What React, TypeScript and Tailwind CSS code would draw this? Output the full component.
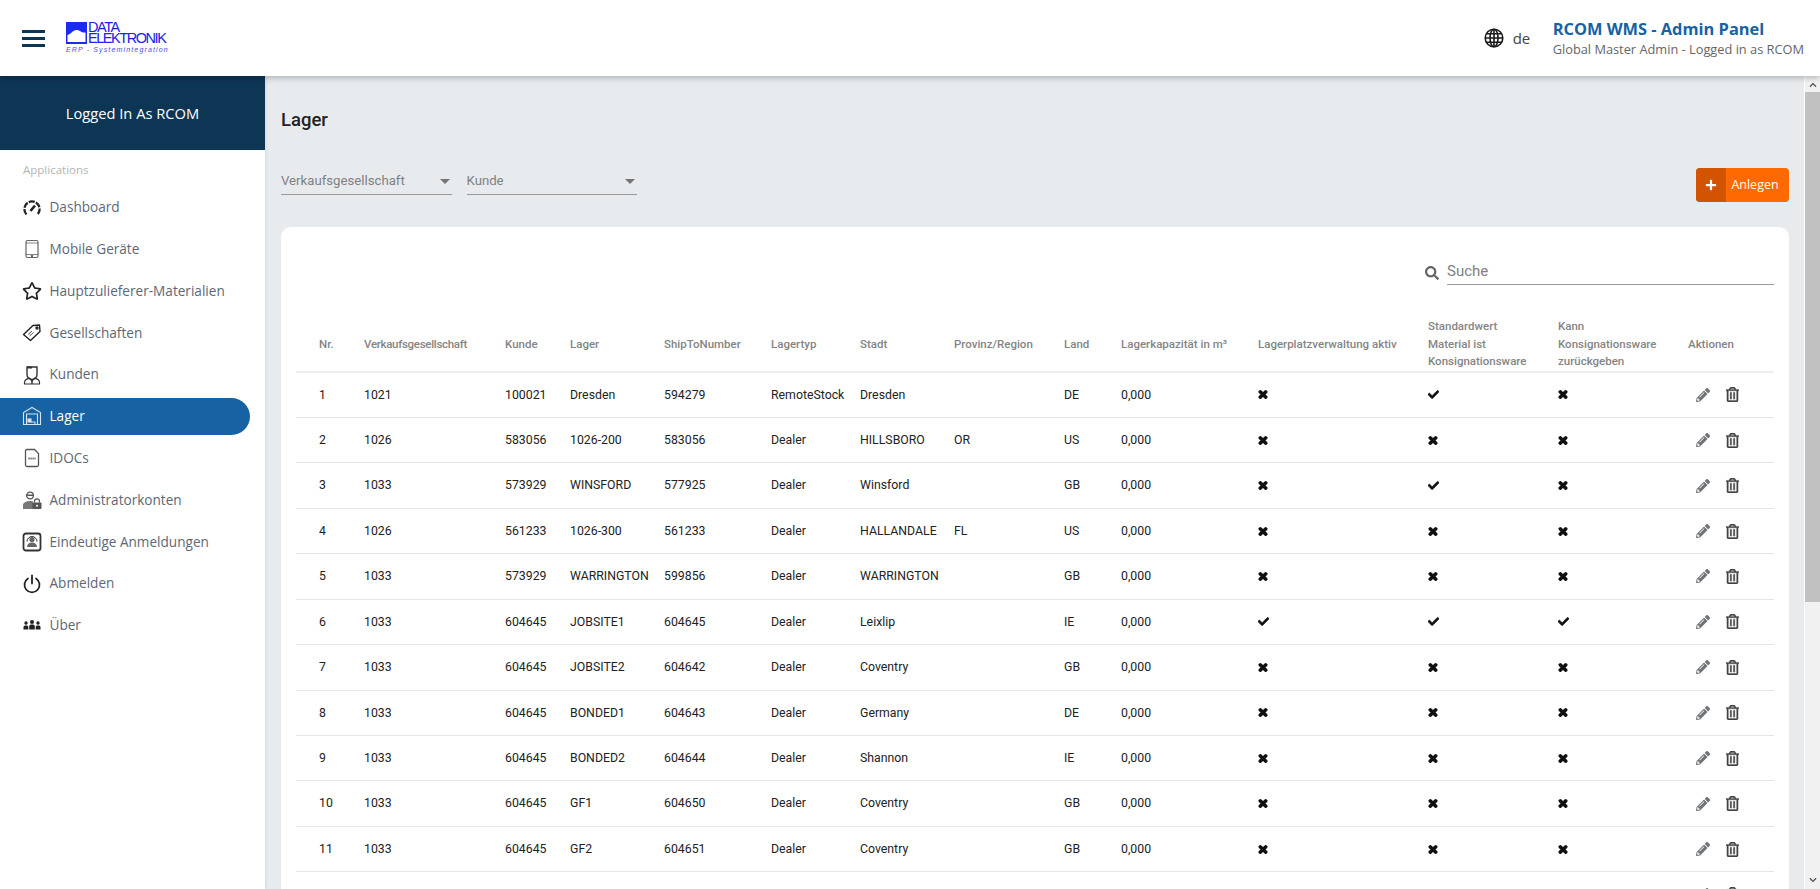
import React from "react";
import { FaCheck, FaTimes, FaPencilAlt, FaRegTrashAlt, FaSearch, FaPlus, FaRegStar, FaChevronUp, FaChevronDown } from "react-icons/fa";

const ic = "w-[20px] h-[20px] shrink-0";

function Gauge() {
  return (
    <svg viewBox="0 0 20 20" className={ic} fill="none" stroke="#222" strokeWidth="2.3">
      <path d="M4.500 16.500A7.500 7.500 0 0 1 2.400 11 7.600 7.600 0 0 1 17.600 11a7.500 7.500 0 0 1-2.100 5.500" strokeDasharray="6 1.300" />
      <path d="M8.500 13l4.500-5.500" strokeWidth="2.600" />
    </svg>
  );
}
function Tablet() {
  return (
    <svg viewBox="0 0 20 20" className={ic} fill="none" stroke="#666" strokeWidth="1.2">
      <rect x="4" y="1.500" width="12" height="17" rx="1.500" />
      <path d="M4 15.500h12M4 4h12" strokeWidth="0.8" />
      <circle cx="10" cy="17" r="0.6" fill="#666" />
    </svg>
  );
}
function Tag() {
  return (
    <svg viewBox="0 0 20 20" className={ic} fill="none" stroke="#222" strokeWidth="1.4">
      <path d="M1.500 11.500 11 2.500l6.500-.5.500 6.500-9.500 9z" strokeLinejoin="round" />
      <circle cx="15" cy="5" r="1" />
      <path d="M6 11.500l4-3.500M7.500 13l4-3.500" strokeWidth="1" stroke="#555" />
    </svg>
  );
}
function Client() {
  return (
    <svg viewBox="0 0 20 20" className={ic} fill="none" stroke="#333" strokeWidth="1.4">
      <path d="M5 2h10v7.500a5 5 0 0 1-10 0z" />
      <path d="M5 2.500l5 0" strokeWidth="2" />
      <path d="M2.500 19v-1.500c0-2.500 2-3.500 5-4.300l2.500 2.800 2.500-2.800c3 .8 5 1.800 5 4.300V19z" strokeWidth="1.2" />
      <path d="M10 16v3" />
    </svg>
  );
}
function Warehouse({ color = "#d5e3ef" }: { color?: string }) {
  return (
    <svg viewBox="0 0 20 20" className={ic} fill="none" stroke={color} strokeWidth="1.1">
      <path d="M1.500 18.500V6.500L10 1.500l8.500 5v12z" />
      <path d="M4.500 18.500V8h11v10.500" />
      <rect x="6" y="13" width="3" height="3" fill={color} />
      <path d="M9 16h4v2.500H6" />
    </svg>
  );
}
function FileXml() {
  return (
    <svg viewBox="0 0 20 20" className={ic} fill="none" stroke="#555" strokeWidth="1.3">
      <path d="M3.500 3a1.500 1.500 0 0 1 1.500-1.500h7.500l4 4V17a1.500 1.500 0 0 1-1.500 1.500H5A1.500 1.500 0 0 1 3.500 17z" />
      <path d="M6.500 10.500h7" strokeWidth="2" strokeDasharray="1.200 .8" />
    </svg>
  );
}
function AdminUser() {
  return (
    <svg viewBox="0 0 20 20" className={ic} fill="#555">
      <circle cx="8" cy="5.500" r="3.400" fill="none" stroke="#555" strokeWidth="1.200" />
      <path d="M4.500 4.500h7V6h-7z" />
      <path d="M1 19v-3.500c0-3 3-4.500 7-4.500 1 0 2 .1 3 .4V19z" fill="#777" />
      <rect x="10.500" y="12.500" width="9" height="6.500" rx="1" fill="#555" />
      <path d="M12.500 12.500v-1.200a2.500 2.500 0 0 1 5 0v1.200" fill="none" stroke="#555" strokeWidth="1.200" />
      <circle cx="15" cy="15.700" r="1" fill="#fff" />
    </svg>
  );
}
function Unique() {
  return (
    <svg viewBox="0 0 20 20" className={ic} fill="none" stroke="#333" strokeWidth="1.400">
      <rect x="1.500" y="1.500" width="17" height="17" rx="2.500" strokeWidth="1.800" />
      <circle cx="10" cy="7.500" r="2.600" fill="#666" stroke="none" />
      <path d="M5 15c0-3 2-4.500 5-4.500s5 1.500 5 4.500z" fill="#666" stroke="none" />
      <path d="M5 9.500a5 5 0 0 1 10 0" strokeWidth="1" />
    </svg>
  );
}
function Power() {
  return (
    <svg viewBox="0 0 20 20" className={ic} fill="none" stroke="#222" strokeWidth="1.800" strokeLinecap="round">
      <path d="M6 4.500a7.500 7.500 0 1 0 8 0" />
      <path d="M10 1.500v8" />
    </svg>
  );
}
function Team() {
  return (
    <svg viewBox="0 0 20 20" className={ic} fill="#222">
      <circle cx="4" cy="8" r="1.700" />
      <circle cx="10" cy="7" r="2" />
      <circle cx="16" cy="8" r="1.700" />
      <path d="M1.500 14.500V12a1.500 1.500 0 0 1 1.500-1.500h2A1.500 1.500 0 0 1 6.300 12v2.500z" />
      <path d="M7.200 14.500v-3.300A1.800 1.800 0 0 1 9 9.500h2a1.800 1.800 0 0 1 1.800 1.700v3.300z" />
      <path d="M13.700 14.500V12a1.500 1.500 0 0 1 1.300-1.500h2a1.500 1.500 0 0 1 1.500 1.500v2.500z" />
    </svg>
  );
}
function Globe() {
  return (
    <svg viewBox="0 0 20 20" className="w-[20px] h-[20px] shrink-0" fill="none" stroke="#1a1a1a" strokeWidth="1.600">
      <circle cx="10" cy="10" r="8.800" />
      <ellipse cx="10" cy="10" rx="4" ry="8.800" />
      <path d="M10 1.200v17.600M1.200 10h17.600M2.500 5.800h15M2.500 14.200h15" />
    </svg>
  );
}

const nav = [
  { label: "Dashboard", icon: <Gauge /> },
  { label: "Mobile Geräte", icon: <Tablet /> },
  { label: "Hauptzulieferer-Materialien", icon: <FaRegStar className="w-[20px] h-[20px] shrink-0 text-[#222]" /> },
  { label: "Gesellschaften", icon: <Tag /> },
  { label: "Kunden", icon: <Client /> },
  { label: "Lager", icon: <Warehouse />, active: true },
  { label: "IDOCs", icon: <FileXml /> },
  { label: "Administratorkonten", icon: <AdminUser /> },
  { label: "Eindeutige Anmeldungen", icon: <Unique /> },
  { label: "Abmelden", icon: <Power /> },
  { label: "Über", icon: <Team /> },
];

type Row = [string, string, string, string, string, string, string, string, string, boolean, boolean, boolean];
const rows: Row[] = [
  ["1021", "100021", "Dresden", "594279", "RemoteStock", "Dresden", "", "DE", "0,000", false, true, false],
  ["1026", "583056", "1026-200", "583056", "Dealer", "HILLSBORO", "OR", "US", "0,000", false, false, false],
  ["1033", "573929", "WINSFORD", "577925", "Dealer", "Winsford", "", "GB", "0,000", false, true, false],
  ["1026", "561233", "1026-300", "561233", "Dealer", "HALLANDALE", "FL", "US", "0,000", false, false, false],
  ["1033", "573929", "WARRINGTON", "599856", "Dealer", "WARRINGTON", "", "GB", "0,000", false, false, false],
  ["1033", "604645", "JOBSITE1", "604645", "Dealer", "Leixlip", "", "IE", "0,000", true, true, true],
  ["1033", "604645", "JOBSITE2", "604642", "Dealer", "Coventry", "", "GB", "0,000", false, false, false],
  ["1033", "604645", "BONDED1", "604643", "Dealer", "Germany", "", "DE", "0,000", false, false, false],
  ["1033", "604645", "BONDED2", "604644", "Dealer", "Shannon", "", "IE", "0,000", false, false, false],
  ["1033", "604645", "GF1", "604650", "Dealer", "Coventry", "", "GB", "0,000", false, false, false],
  ["1033", "604645", "GF2", "604651", "Dealer", "Coventry", "", "GB", "0,000", false, false, false],
];

const heads: React.ReactNode[] = [
  "Nr.", <span className="tracking-[-0.3px]">Verkaufsgesellschaft</span>, "Kunde", "Lager", "ShipToNumber", "Lagertyp", "Stadt", "Provinz/Region", "Land",
  "Lagerkapazität in m³", "Lagerplatzverwaltung aktiv",
  <>Standardwert<br />Material ist<br />Konsignationsware</>,
  <>Kann<br />Konsignationsware<br />zurückgeben</>,
  "Aktionen",
];
const widths = [68, 141, 65, 94, 107, 89, 94, 110, 57, 137, 170, 130, 130, 86];

function Flag({ on }: { on: boolean }) {
  return on
    ? <FaCheck className="w-[11px] h-[11px] text-[#111]" stroke="currentColor" strokeWidth={30} />
    : <FaTimes className="w-[10px] h-[11px] text-[#111]" stroke="currentColor" strokeWidth={70} />;
}
function Actions() {
  return (
    <div className="flex items-center gap-[16px] pl-[8px]">
      <FaPencilAlt className="w-[14px] h-[14px] text-[#6f7378]" />
      <FaRegTrashAlt className="w-[13px] h-[15px] text-[#444]" stroke="currentColor" strokeWidth={12} />
    </div>
  );
}
function Select({ label }: { label: string }) {
  return (
    <div className="w-[170.500px] h-[40px] flex items-end justify-between border-b border-[#9a9a9a] pr-[2px] pb-[4px]">
      <span className="text-[13.200px] leading-[18px] text-[#808080]">{label}</span>
      <span className="w-0 h-0 mb-[6px] border-x-[5.500px] border-x-transparent border-t-[5.500px] border-t-[#757575]" />
    </div>
  );
}

export default function App() {
  return (
    <div className="w-full h-screen flex flex-col overflow-hidden bg-[#e8ebee] font-['Roboto',sans-serif]">
      <header className="h-[76px] shrink-0 bg-white flex items-center pl-[22px] pr-[16px] shadow-[0_2px_6px_rgba(0,0,0,0.25)] relative z-10">
        <div className="w-[23px] flex flex-col gap-[4px]">
          <span className="h-[3px] bg-[#0d3554] block" />
          <span className="h-[3px] bg-[#0d3554] block" />
          <span className="h-[3px] bg-[#0d3554] block" />
        </div>
        <div className="ml-[21px] w-[102px] flex flex-col font-['Liberation_Sans',sans-serif] text-[#2020ee]">
          <div className="flex">
            <svg viewBox="0 0 21 22" className="w-[21px] h-[22px] shrink-0">
              <rect width="21" height="22" fill="#1a2af0" />
              <path d="M1.500 13c4-1 5-5 9-5s4 3 9 2.500V20h-18z" fill="#fff" />
            </svg>
            <div className="ml-[1px] flex flex-col text-[14.500px] leading-[11px] tracking-[-1.450px]">
              <span>DATA</span>
              <span>ELEKTRONIK</span>
            </div>
          </div>
          <span className="mt-[1px] text-[7px] leading-[9px] italic text-[#4a4af0] tracking-[1.150px] whitespace-nowrap">ERP - Systemintegration</span>
        </div>
        <div className="ml-auto flex items-center font-['Open_Sans',sans-serif]">
          <Globe />
          <span className="ml-[9px] w-[40px] text-[15px] text-[#444]">de</span>
          <div className="flex flex-col">
            <span className="text-[16.400px] leading-[22px] font-bold text-[#1762a3]">RCOM WMS - Admin Panel</span>
            <span className="text-[12.800px] leading-[18px] text-[#666]">Global Master Admin - Logged in as RCOM</span>
          </div>
        </div>
      </header>

      <div className="flex-1 flex min-h-0">
        <aside className="w-[265px] shrink-0 bg-white font-['Open_Sans',sans-serif] shadow-[1px_0_3px_rgba(0,0,0,0.08)]">
          <div className="h-[74px] bg-[#0d3554] flex items-center justify-center text-white text-[14.700px]">Logged In As RCOM</div>
          <div className="pl-[23px] pt-[11px] h-[35px] text-[11.500px] text-[#b4b4b4]">Applications</div>
          <nav className="flex flex-col gap-[4.800px] pt-[4px]">
            {nav.map((n) => (
              <div
                key={n.label}
                className={n.active
                  ? "h-[37px] w-[250px] flex items-center pl-[22px] gap-[7.500px] rounded-r-full bg-[#1762a3] text-white text-[13.600px]"
                  : "h-[37px] w-[250px] flex items-center pl-[22px] gap-[7.500px] text-[#5d6776] text-[13.600px]"}
              >
                {n.icon}
                <span>{n.label}</span>
              </div>
            ))}
          </nav>
        </aside>

        <main className="flex-1 min-w-0 overflow-hidden pl-[16px] pr-[15px]">
          <h1 className="mt-[32px] text-[18.500px] leading-[24px] font-medium text-[#222]">Lager</h1>
          <div className="mt-[23px] flex items-start gap-[15px]">
            <Select label="Verkaufsgesellschaft" />
            <Select label="Kunde" />
            <button className="ml-auto mt-[13px] w-[93px] h-[34px] flex items-center rounded-[4px] overflow-hidden bg-[#ff6a00] text-white font-['Open_Sans',sans-serif] text-[12.500px]">
              <span className="w-[30px] h-full bg-[#d35400] flex items-center justify-center"><FaPlus className="w-[12px] h-[12px]" /></span>
              <span className="flex-1 text-center pr-[5px] pt-[1px]">Anlegen</span>
            </button>
          </div>
          <section className="mt-[25px] bg-white rounded-[10px] px-[15px] pt-[30px] h-[700px]">
            <div className="ml-auto w-[349px] h-[28px] flex items-end">
              <FaSearch className="w-[14px] h-[14px] mb-[5px] text-[#666]" />
              <div className="ml-[8px] flex-1 h-full border-b border-[#9a9a9a] text-[15px] text-[#808080] leading-[20px] pt-[4px]">Suche</div>
            </div>
            <table className="mt-[27px] w-full table-fixed border-collapse">
              <colgroup>
                {widths.map((w, i) => <col key={i} style={{ width: w }} />)}
              </colgroup>
              <thead>
                <tr className="h-[60px] border-b-2 border-[#eeeeee]">
                  {heads.map((h, i) => (
                    <th key={i} className={(i === 0 ? "pl-[23px] " : "") + "text-left align-middle pr-[8px] pt-[6px] text-[11.500px] leading-[17.500px] font-medium text-[#858585]"}>{h}</th>
                  ))}
                </tr>
              </thead>
              <tbody>
                {rows.map((r, idx) => (
                  <tr key={idx} className="h-[45.450px] border-b border-[#e6e6e6] text-[12.300px] font-[450] text-[#222]">
                    <td className="pl-[23px]">{idx + 1}</td>
                    {r.slice(0, 9).map((c, i) => <td key={i} className="whitespace-nowrap">{c as string}</td>)}
                    {r.slice(9).map((c, i) => <td key={i}><Flag on={c as boolean} /></td>)}
                    <td><Actions /></td>
                  </tr>
                ))}
                <tr className="h-[45.450px]">
                  <td colSpan={13} />
                  <td><Actions /></td>
                </tr>
              </tbody>
            </table>
          </section>
        </main>

        <div className="w-[16px] shrink-0 bg-[#f1f1f1] border-l border-white flex flex-col items-center">
          <FaChevronUp className="w-[8px] h-[8px] mt-[5px] mb-[3px] text-[#505050] shrink-0" />
          <div className="w-full h-[510px] bg-[#c1c1c1] shrink-0" />
          <div className="flex-1" />
          <FaChevronDown className="w-[8px] h-[8px] mb-[5px] text-[#505050] shrink-0" />
        </div>
      </div>
    </div>
  );
}
